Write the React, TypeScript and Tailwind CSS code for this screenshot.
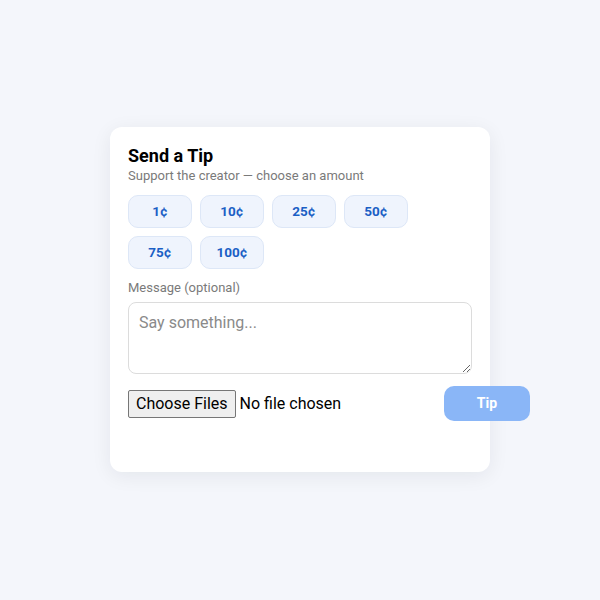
import React from "react";

const amounts = ["1¢", "10¢", "25¢", "50¢", "75¢", "100¢"];

export default function App() {
  return (
    <div
      className="w-[600px] h-[600px] bg-[#f4f6fb] flex items-start justify-center pt-[127px]"
      style={{ fontFamily: "Roboto, 'Liberation Sans', sans-serif" }}
    >
      <div className="w-[380px] h-[345px] bg-white rounded-[12px] shadow-[0_4px_20px_rgba(15,23,42,0.07)] px-[18px] pt-[18px]">
        <h1 className="text-[18px] leading-[22px] font-bold text-black">Send a Tip</h1>
        <p className="text-[13px] leading-[18px] text-[#7a7a7a]">
          Support the creator — choose an amount
        </p>
        <div className="flex flex-wrap gap-[8px] mt-[10px] w-[290px]">
          {amounts.map((a) => (
            <button
              key={a}
              className="w-[64px] h-[33px] rounded-[10px] bg-[#eff4fd] border border-[#dde7f7] text-[#1b5fc5] text-[13.5px] font-bold"
            >
              {a}
            </button>
          ))}
        </div>
        <label className="block text-[13px] leading-[18px] text-[#7a7a7a] mt-[10px]">
          Message (optional)
        </label>
        <textarea
          placeholder="Say something..."
          className="block w-full h-[72px] mt-[5px] rounded-[8px] border border-[#dcdcdc] px-[10px] py-[9px] text-[16px] leading-[22px] placeholder:text-[#8a8a8a] outline-none"
        />
        <div className="flex items-center justify-between w-[402px] mt-[12px]">
          <input type="file" multiple className="text-[16px] text-black file:text-[16px] file:px-[7px] file:py-[1px] file:border file:border-[#767676] file:bg-[#efefef] file:rounded-[2px] file:mr-[4px] file:text-black" />
          <button className="w-[86px] h-[35px] rounded-[10px] bg-[#8ab6f7] text-white text-[14px] font-bold">
            Tip
          </button>
        </div>
      </div>
    </div>
  );
}
